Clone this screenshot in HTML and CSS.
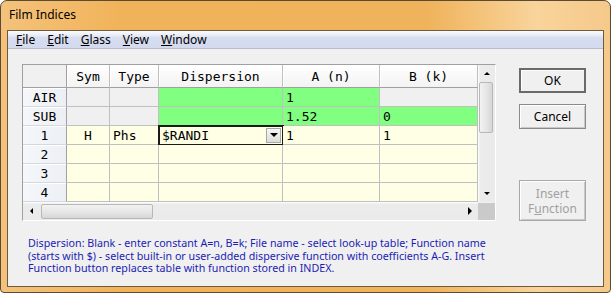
FILE: index.html
```html
<!DOCTYPE html>
<html lang="en">
<head>
  <meta charset="UTF-8" />
  <title>Film Indices</title>
  <link rel="stylesheet" href="styles.css">
</head>
<body>
  <div class="window">
    <div class="titlebar">Film Indices</div>
    <div class="client">
      <div class="menubar">
        <span class="menu"><u>F</u>ile</span>
        <span class="menu"><u>E</u>dit</span>
        <span class="menu"><u>G</u>lass</span>
        <span class="menu"><u>V</u>iew</span>
        <span class="menu"><u>W</u>indow</span>
      </div>

      <div class="body">
        <div class="gridbox">
          <div class="sheet">
            <div class="c corner"></div>
            <div class="c hdr">Sym</div>
            <div class="c hdr">Type</div>
            <div class="c hdr">Dispersion</div>
            <div class="c hdr">A (n)</div>
            <div class="c hdr">B (k)</div>

            <div class="c rowhdr">AIR</div>
            <div class="c grey"></div>
            <div class="c grey"></div>
            <div class="c green"></div>
            <div class="c green">1</div>
            <div class="c grey"></div>

            <div class="c rowhdr">SUB</div>
            <div class="c grey"></div>
            <div class="c grey"></div>
            <div class="c green"></div>
            <div class="c green">1.52</div>
            <div class="c green">0</div>

            <div class="c rowhdr">1</div>
            <div class="c center">H</div>
            <div class="c">Phs</div>
            <div class="c edit">
              <span>$RANDI</span>
              <span class="dropbtn"><span class="tri-down"></span></span>
            </div>
            <div class="c">1</div>
            <div class="c">1</div>

            <div class="c rowhdr">2</div>
            <div class="c"></div><div class="c"></div><div class="c"></div><div class="c"></div><div class="c"></div>

            <div class="c rowhdr">3</div>
            <div class="c"></div><div class="c"></div><div class="c"></div><div class="c"></div><div class="c"></div>

            <div class="c rowhdr">4</div>
            <div class="c"></div><div class="c"></div><div class="c"></div><div class="c"></div><div class="c"></div>
          </div>

          <div class="vscroll">
            <div class="arrow"><span class="tri-up"></span></div>
            <div class="vthumb"></div>
            <div class="track"></div>
            <div class="arrow"><span class="tri-down small"></span></div>
          </div>

          <div class="hscroll">
            <div class="arrow"><span class="tri-left"></span></div>
            <div class="hthumb"></div>
            <div class="track"></div>
            <div class="arrow"><span class="tri-right"></span></div>
          </div>
          <div class="sizebox"></div>
        </div>

        <div class="buttons">
          <button class="btn default">OK</button>
          <button class="btn">Cancel</button>
          <button class="btn tall" disabled>Insert<br>F<u>u</u>nction</button>
        </div>
      </div>

      <p class="help">
        Dispersion: Blank - enter constant A=n, B=k; File name - select look-up table; Function name<br>
        (starts with $) - select built-in or user-added dispersive function with coefficients A-G. Insert<br>
        Function button replaces table with function stored in INDEX.
      </p>
    </div>
  </div>
</body>
</html>
```

FILE: styles.css
```css
body {
  margin: 0;
  background: #fff;
  font-family: "Noto Sans", "DejaVu Sans", sans-serif;
}
.window {
  width: 611px;
  height: 293px;
  box-sizing: border-box;
  border: 1px solid #5b4a34;
  border-radius: 7px 7px 4px 4px;
  background: linear-gradient(90deg, #f4c27c 0%, #f1b359 20%, #efb35c 70%, #f9d49b 88%, #f5c98a 100%);
  padding: 0 6px 5px 6px;
  display: flex;
  flex-direction: column;
}
.titlebar {
  height: 29px;
  line-height: 28px;
  padding-left: 2px;
  font-size: 12px;
  color: #000;
}
.client {
  flex: 1;
  border: 1px solid #6e5b3f;
  background: #f0f0f0;
  display: flex;
  flex-direction: column;
}
.menubar {
  height: 17px;
  border-bottom: 1px solid #b6bccc;
  background: linear-gradient(#fbfcfe 0%, #e9edf7 25%, #d7ddf0 40%, #d4daee 100%);
  display: flex;
  align-items: center;
  padding-left: 2px;
  font-size: 12px;
}
.menu {
  padding: 0 6px;
}

.body {
  display: flex;
  padding: 15px 0 0 14px;
}
.gridbox {
  display: grid;
  grid-template-columns: 455px 17px;
  grid-template-rows: 137px 18px;
  border-top: 1px solid #a0a0a0;
  border-left: 1px solid #a0a0a0;
  border-right: 1px solid #fff;
  border-bottom: 1px solid #fff;
  background: #f0f0f0;
}
.sheet {
  display: grid;
  grid-template-columns: 44px 43px 49px 124px 97px 98px;
  grid-template-rows: 23px repeat(6, 19px);
  font-family: "DejaVu Sans Mono", "Liberation Mono", monospace;
  font-size: 13px;
  color: #000;
}
.c {
  box-sizing: border-box;
  border-right: 1px solid #c0c0c0;
  border-bottom: 1px solid #c0c0c0;
  background: #ffffe6;
  display: flex;
  align-items: center;
  padding-left: 3px;
  white-space: nowrap;
}
.c.center {
  justify-content: center;
  padding-left: 0;
}
.c.corner {
  background: #f0f0f0;
  border-right-color: #a0a0a0;
  border-bottom-color: #a0a0a0;
}
.c.hdr {
  justify-content: center;
  padding-left: 0;
  background: linear-gradient(#ffffff, #f3f3f3);
  box-shadow: inset 1px 1px #fff;
  border-bottom-color: #a0a0a0;
}
.c.rowhdr {
  justify-content: center;
  padding-left: 0;
  background: linear-gradient(90deg, #f5f7fa, #eceff4);
  box-shadow: inset 0 1px #fff;
  border-right-color: #a0a0a0;
  border-bottom-color: #d3d7de;
}
.c.grey {
  background: #f0f0f0;
}
.c.green {
  background: #80ff80;
}
.c.edit {
  outline: 2px solid #1a1a1a;
  outline-offset: -1px;
  justify-content: space-between;
  padding-right: 1px;
}
.dropbtn {
  width: 15px;
  height: 15px;
  box-sizing: border-box;
  border: 1px solid #a8a8a8;
  background: linear-gradient(#f6f6f6, #dcdcdc);
  display: flex;
  align-items: center;
  justify-content: center;
}

.tri-down {
  width: 0;
  height: 0;
  border-left: 4px solid transparent;
  border-right: 4px solid transparent;
  border-top: 4px solid #000;
}
.tri-down.small {
  border-left-width: 3px;
  border-right-width: 3px;
  border-top-width: 3px;
}
.tri-up {
  width: 0;
  height: 0;
  border-left: 3px solid transparent;
  border-right: 3px solid transparent;
  border-bottom: 3px solid #000;
}
.tri-left {
  width: 0;
  height: 0;
  border-top: 3px solid transparent;
  border-bottom: 3px solid transparent;
  border-right: 3px solid #000;
}
.tri-right {
  width: 0;
  height: 0;
  border-top: 4px solid transparent;
  border-bottom: 4px solid transparent;
  border-left: 4px solid #000;
}

.vscroll {
  display: flex;
  flex-direction: column;
  background: linear-gradient(90deg, #fff 0, #ececec 2px, #eaeaea 100%);
}
.hscroll {
  display: flex;
  background: linear-gradient(#fff 0, #ececec 2px, #eaeaea 100%);
}
.arrow {
  flex: 0 0 17px;
  display: flex;
  align-items: center;
  justify-content: center;
}
.vscroll .arrow {
  height: 17px;
}
.track {
  flex: 1;
}
.vthumb {
  height: 49px;
  margin: 0 2px 0 1px;
  border: 1px solid #b8b8b8;
  border-radius: 2px;
  background: linear-gradient(90deg, #f2f2f2, #e4e4e4 60%, #d6d6d6);
}
.hthumb {
  width: 110px;
  margin: 2px 0 1px 1px;
  border: 1px solid #b8b8b8;
  border-radius: 2px;
  background: linear-gradient(#f2f2f2, #e4e4e4 60%, #d6d6d6);
}
.sizebox {
  background: #cacaca;
  margin-top: 1px;
}

.buttons {
  display: flex;
  flex-direction: column;
  width: 67px;
  margin-left: 23px;
  padding-top: 4px;
}
.btn {
  width: 67px;
  height: 25px;
  margin-bottom: 11px;
  box-sizing: border-box;
  border: 1px solid #8a8a8a;
  box-shadow: inset 1px 1px #fff, inset -1px -1px #c8c8c8;
  background: #f0f0f0;
  font-family: "Noto Sans", "DejaVu Sans", sans-serif;
  font-size: 12px;
  color: #000;
  padding: 0;
}
.btn.default {
  border: 2px solid #6a6a6a;
  box-shadow: inset 1px 1px #fff;
}
.btn.tall {
  height: 41px;
  margin-top: auto;
  margin-bottom: 0;
  line-height: 15px;
  color: #a0a0a0;
  border-color: #a8a8a8;
}

.help {
  margin: 16px 0 0 20px;
  font-size: 10.7px;
  line-height: 12.7px;
  color: #1c1cb4;
  white-space: nowrap;
}
```
